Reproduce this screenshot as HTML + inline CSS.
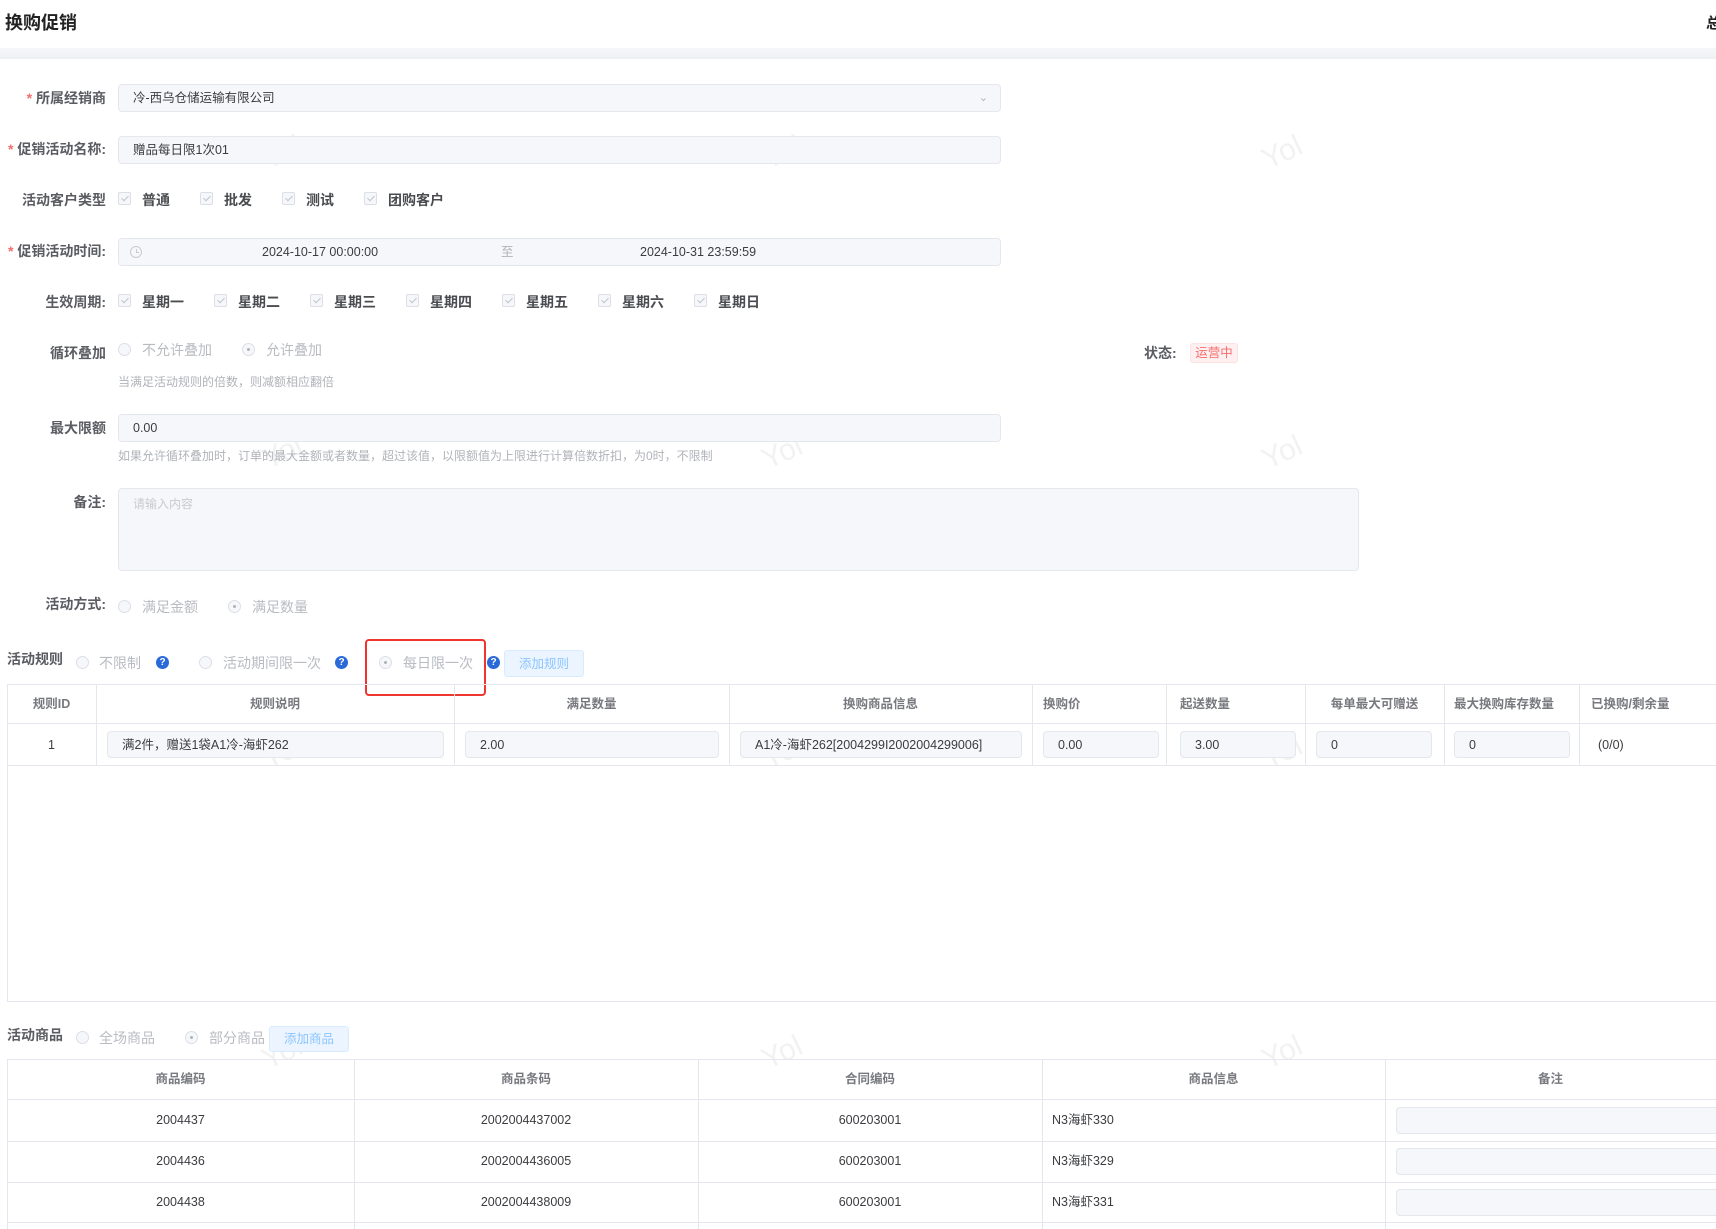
<!DOCTYPE html>
<html style="overflow:hidden;width:1716px;height:1229px"><head><meta charset="utf-8"><style>
*{box-sizing:border-box;margin:0;padding:0}
body{width:1716px;height:1229px;overflow:hidden;background:#fff;font-family:"Liberation Sans","Noto Sans CJK SC",sans-serif;color:#606266;position:relative;font-size:13px;line-height:16px}
.a{position:absolute;white-space:nowrap}
.lbl{font-weight:bold;font-size:14px;color:#5a5c61;text-align:right}
.inp{position:absolute;background:#f5f7fa;border:1px solid #e4e7ed;border-radius:4px;color:#3a3c40;font-size:12.5px;padding-left:14px;display:flex;align-items:center;overflow:hidden}
.cb{position:absolute;width:13px;height:13px;border:1px solid #dcdfe6;background:#f5f7fa;border-radius:2px}
.cb:after{content:"";position:absolute;left:3.5px;top:1px;width:3px;height:6px;border:solid #c0c4cc;border-width:0 1px 1px 0;transform:rotate(45deg)}
.ct{font-size:14px;font-weight:bold;color:#4a4c50}
.rd{position:absolute;width:13px;height:13px;border:1px solid #dcdfe6;background:#f5f7fa;border-radius:50%}
.rd.on:after{content:"";position:absolute;left:4px;top:4px;width:3px;height:3px;border-radius:50%;background:#b0b3b8}
.rt{font-size:14px;color:#b8bbc0}
.q{position:absolute;width:13px;height:13px;border-radius:50%;background:#2a6ad8;color:#fff;font-size:10px;font-weight:bold;text-align:center;line-height:13px}
.btn{position:absolute;background:#ecf5ff;border:1px solid #d9ecff;color:#8cc5ff;font-size:12.5px;border-radius:3px;display:flex;align-items:center;justify-content:center}
.hint{font-size:12px;color:#b0b3b8}
.vl{position:absolute;width:1px;background:#e4e7ed}
.hl{position:absolute;height:1px;background:#e4e7ed}
.th{position:absolute;font-size:12.5px;font-weight:bold;color:#77797e;text-align:center;line-height:16px}
.td{position:absolute;font-size:12.5px;color:#3a3c40;text-align:center;line-height:16px}
.wm{position:absolute;color:#f2f2f2;font-size:30px;transform:rotate(-25deg)}
</style></head><body>
<div class="wm" style="left:262px;top:145px">Yol</div><div class="wm" style="left:762px;top:145px">Yol</div><div class="wm" style="left:1262px;top:145px">Yol</div>
<div class="wm" style="left:262px;top:445px">Yol</div><div class="wm" style="left:762px;top:445px">Yol</div><div class="wm" style="left:1262px;top:445px">Yol</div>
<div class="wm" style="left:262px;top:745px">Yol</div><div class="wm" style="left:762px;top:745px">Yol</div><div class="wm" style="left:1262px;top:745px">Yol</div>
<div class="wm" style="left:262px;top:1045px">Yol</div><div class="wm" style="left:762px;top:1045px">Yol</div><div class="wm" style="left:1262px;top:1045px">Yol</div>

<div class="a" style="left:5px;top:12px;font-size:18px;line-height:22px;font-weight:bold;color:#222">换购促销</div>
<div class="a" style="left:1706px;top:16px;font-size:15px;font-weight:bold;color:#222">总</div>
<div class="a" style="left:0;top:48px;width:1716px;height:11px;background:linear-gradient(#f6f7f9,#eff0f3)"></div>

<div class="a lbl" style="left:0;width:106px;top:90px"><span style="color:#f56c6c">* </span>所属经销商</div>
<div class="inp" style="left:118px;top:84px;width:883px;height:28px">冷-西乌仓储运输有限公司<span style="position:absolute;right:12px;top:5px;color:#b0b3b8;font-size:11px">&#8964;</span></div>
<div class="a lbl" style="left:0;width:106px;top:141px"><span style="color:#f56c6c">* </span>促销活动名称:</div>
<div class="inp" style="left:118px;top:136px;width:883px;height:28px">赠品每日限1次01</div>

<div class="a lbl" style="left:0;width:106px;top:192px">活动客户类型</div>
<div class="cb" style="left:118px;top:192px"></div><div class="a ct" style="left:142px;top:192px">普通</div>
<div class="cb" style="left:200px;top:192px"></div><div class="a ct" style="left:224px;top:192px">批发</div>
<div class="cb" style="left:282px;top:192px"></div><div class="a ct" style="left:306px;top:192px">测试</div>
<div class="cb" style="left:364px;top:192px"></div><div class="a ct" style="left:388px;top:192px">团购客户</div>

<div class="a lbl" style="left:0;width:106px;top:243px"><span style="color:#f56c6c">* </span>促销活动时间:</div>
<div class="inp" style="left:118px;top:238px;width:883px;height:28px"></div>
<div class="a" style="left:130px;top:246px;width:12px;height:12px;border:1px solid #c8cbd0;border-radius:50%"></div>
<div class="a" style="left:136px;top:249px;width:1px;height:4px;background:#c8cbd0"></div>
<div class="a" style="left:136px;top:252px;width:3px;height:1px;background:#c8cbd0"></div>
<div class="a" style="left:262px;top:244px;font-size:12.5px;color:#3a3c40">2024-10-17 00:00:00</div>
<div class="a" style="left:501px;top:244px;font-size:12.5px;color:#b0b3b8">至</div>
<div class="a" style="left:640px;top:244px;font-size:12.5px;color:#3a3c40">2024-10-31 23:59:59</div>

<div class="a lbl" style="left:0;width:106px;top:294px">生效周期:</div>
<div class="cb" style="left:118px;top:294px"></div><div class="a ct" style="left:142px;top:294px">星期一</div>
<div class="cb" style="left:214px;top:294px"></div><div class="a ct" style="left:238px;top:294px">星期二</div>
<div class="cb" style="left:310px;top:294px"></div><div class="a ct" style="left:334px;top:294px">星期三</div>
<div class="cb" style="left:406px;top:294px"></div><div class="a ct" style="left:430px;top:294px">星期四</div>
<div class="cb" style="left:502px;top:294px"></div><div class="a ct" style="left:526px;top:294px">星期五</div>
<div class="cb" style="left:598px;top:294px"></div><div class="a ct" style="left:622px;top:294px">星期六</div>
<div class="cb" style="left:694px;top:294px"></div><div class="a ct" style="left:718px;top:294px">星期日</div>

<div class="a lbl" style="left:0;width:106px;top:345px">循环叠加</div>
<div class="rd" style="left:118px;top:343px"></div><div class="a rt" style="left:142px;top:342px">不允许叠加</div>
<div class="rd on" style="left:242px;top:343px"></div><div class="a rt" style="left:266px;top:342px">允许叠加</div>
<div class="a hint" style="left:118px;top:374px">当满足活动规则的倍数，则减额相应翻倍</div>
<div class="a lbl" style="left:1144px;top:345px">状态:</div>
<div class="a" style="left:1190px;top:343px;width:48px;height:20px;background:#fef0f0;border:1px solid #fde2e2;border-radius:3px;color:#f56c6c;font-size:12.5px;text-align:center;line-height:18px">运营中</div>

<div class="a lbl" style="left:0;width:106px;top:420px">最大限额</div>
<div class="inp" style="left:118px;top:414px;width:883px;height:28px">0.00</div>
<div class="a hint" style="left:118px;top:448px">如果允许循环叠加时，订单的最大金额或者数量，超过该值，以限额值为上限进行计算倍数折扣，为0时，不限制</div>

<div class="a lbl" style="left:0;width:106px;top:494px">备注:</div>
<div class="inp" style="left:118px;top:488px;width:1241px;height:83px;align-items:flex-start;padding-top:7px;color:#c8cbd0;font-size:12px">请输入内容</div>

<div class="a lbl" style="left:0;width:106px;top:596px">活动方式:</div>
<div class="rd" style="left:118px;top:600px"></div><div class="a rt" style="left:142px;top:599px">满足金额</div>
<div class="rd on" style="left:228px;top:600px"></div><div class="a rt" style="left:252px;top:599px">满足数量</div>

<div class="a lbl" style="left:7px;top:651px;text-align:left">活动规则</div>
<div class="rd" style="left:76px;top:656px"></div><div class="a rt" style="left:99px;top:655px">不限制</div>
<div class="q" style="left:156px;top:656px">?</div>
<div class="rd" style="left:199px;top:656px"></div><div class="a rt" style="left:223px;top:655px">活动期间限一次</div>
<div class="q" style="left:335px;top:656px">?</div>
<div class="rd on" style="left:379px;top:656px"></div><div class="a rt" style="left:403px;top:655px">每日限一次</div>
<div class="q" style="left:487px;top:656px">?</div>
<div class="btn" style="left:504px;top:650px;width:80px;height:27px">添加规则</div>
<div class="a" style="left:365px;top:639px;width:121px;height:57px;border:2px solid #ee3530;border-radius:4px"></div>

<div class="a" style="left:7px;top:684px;width:1709px;height:318px;border:1px solid #e4e7ed;border-right:none"></div>
<div class="hl" style="left:7px;top:723px;width:1709px"></div>
<div class="hl" style="left:7px;top:765px;width:1709px"></div>
<div class="vl" style="left:96px;top:684px;height:81px"></div><div class="vl" style="left:454px;top:684px;height:81px"></div><div class="vl" style="left:729px;top:684px;height:81px"></div><div class="vl" style="left:1032px;top:684px;height:81px"></div><div class="vl" style="left:1166px;top:684px;height:81px"></div><div class="vl" style="left:1305px;top:684px;height:81px"></div><div class="vl" style="left:1444px;top:684px;height:81px"></div><div class="vl" style="left:1579px;top:684px;height:81px"></div>
<div class="th" style="left:7px;width:89px;top:696px">规则ID</div>
<div class="th" style="left:96px;width:358px;top:696px">规则说明</div>
<div class="th" style="left:454px;width:275px;top:696px">满足数量</div>
<div class="th" style="left:729px;width:303px;top:696px">换购商品信息</div>
<div class="th" style="left:1032px;width:134px;top:696px;text-align:left;padding-left:11px">换购价</div>
<div class="th" style="left:1166px;width:139px;top:696px;text-align:left;padding-left:14px">起送数量</div>
<div class="th" style="left:1305px;width:139px;top:696px">每单最大可赠送</div>
<div class="th" style="left:1444px;width:135px;top:696px;text-align:left;padding-left:10px">最大换购库存数量</div>
<div class="th" style="left:1579px;width:137px;top:696px;text-align:left;padding-left:12px">已换购/剩余量</div>
<div class="td" style="left:7px;width:89px;top:737px">1</div>
<div class="inp" style="left:107px;top:731px;width:337px;height:27px">满2件，赠送1袋A1冷-海虾262</div>
<div class="inp" style="left:465px;top:731px;width:254px;height:27px">2.00</div>
<div class="inp" style="left:740px;top:731px;width:282px;height:27px">A1冷-海虾262[2004299I2002004299006]</div>
<div class="inp" style="left:1043px;top:731px;width:116px;height:27px">0.00</div>
<div class="inp" style="left:1180px;top:731px;width:116px;height:27px">3.00</div>
<div class="inp" style="left:1316px;top:731px;width:116px;height:27px">0</div>
<div class="inp" style="left:1454px;top:731px;width:116px;height:27px">0</div>
<div class="td" style="left:1598px;top:737px">(0/0)</div>

<div class="a lbl" style="left:7px;top:1027px;text-align:left">活动商品</div>
<div class="rd" style="left:76px;top:1031px"></div><div class="a rt" style="left:99px;top:1030px">全场商品</div>
<div class="rd on" style="left:185px;top:1031px"></div><div class="a rt" style="left:209px;top:1030px">部分商品</div>
<div class="btn" style="left:269px;top:1026px;width:80px;height:26px">添加商品</div>

<div class="a" style="left:7px;top:1059px;width:1709px;height:170px;border:1px solid #e4e7ed;border-right:none;border-bottom:none"></div>
<div class="hl" style="left:7px;top:1099px;width:1709px"></div>
<div class="hl" style="left:7px;top:1141px;width:1709px"></div>
<div class="hl" style="left:7px;top:1182px;width:1709px"></div>
<div class="hl" style="left:7px;top:1222px;width:1709px"></div>
<div class="vl" style="left:354px;top:1059px;height:170px"></div><div class="vl" style="left:698px;top:1059px;height:170px"></div><div class="vl" style="left:1042px;top:1059px;height:170px"></div><div class="vl" style="left:1385px;top:1059px;height:170px"></div>
<div class="th" style="left:7px;width:347px;top:1071px">商品编码</div>
<div class="th" style="left:354px;width:344px;top:1071px">商品条码</div>
<div class="th" style="left:698px;width:344px;top:1071px">合同编码</div>
<div class="th" style="left:1042px;width:343px;top:1071px">商品信息</div>
<div class="th" style="left:1385px;width:331px;top:1071px">备注</div>
<div class="td" style="left:7px;width:347px;top:1112px">2004437</div><div class="td" style="left:354px;width:344px;top:1112px">2002004437002</div><div class="td" style="left:698px;width:344px;top:1112px">600203001</div><div class="td" style="left:1052px;top:1112px">N3海虾330</div>
<div class="inp" style="left:1396px;top:1107px;width:320px;height:27px;border-right:none;border-radius:4px 0 0 4px"></div>
<div class="td" style="left:7px;width:347px;top:1153px">2004436</div><div class="td" style="left:354px;width:344px;top:1153px">2002004436005</div><div class="td" style="left:698px;width:344px;top:1153px">600203001</div><div class="td" style="left:1052px;top:1153px">N3海虾329</div>
<div class="inp" style="left:1396px;top:1148px;width:320px;height:27px;border-right:none;border-radius:4px 0 0 4px"></div>
<div class="td" style="left:7px;width:347px;top:1194px">2004438</div><div class="td" style="left:354px;width:344px;top:1194px">2002004438009</div><div class="td" style="left:698px;width:344px;top:1194px">600203001</div><div class="td" style="left:1052px;top:1194px">N3海虾331</div>
<div class="inp" style="left:1396px;top:1189px;width:320px;height:27px;border-right:none;border-radius:4px 0 0 4px"></div>
</body></html>
